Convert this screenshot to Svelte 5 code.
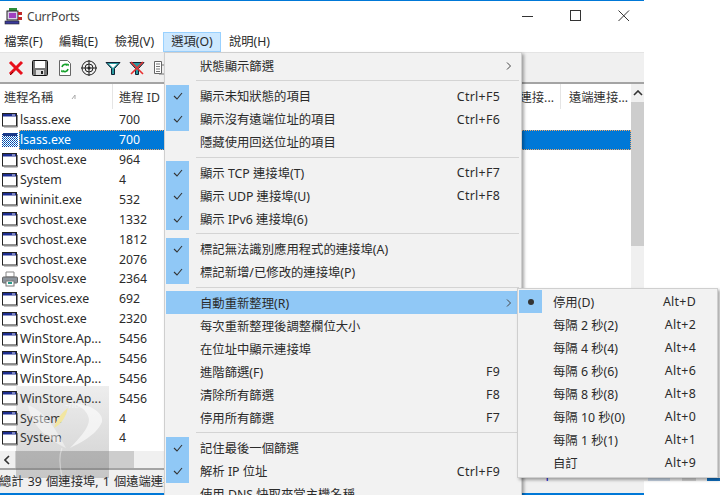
<script>
	const rows = [
		['lsass.exe', 700],
		['lsass.exe', 700, 'selected'],
		['svchost.exe', 964],
		['System', 4],
		['wininit.exe', 532],
		['svchost.exe', 1332],
		['svchost.exe', 1812],
		['svchost.exe', 2076],
		['spoolsv.exe', 2364, 'printer'],
		['services.exe', 692],
		['svchost.exe', 2320],
		['WinStore.Ap...', 5456],
		['WinStore.Ap...', 5456],
		['WinStore.Ap...', 5456],
		['WinStore.Ap...', 5456],
		['System', 4],
		['System', 4]
	];

	const menuBar = ['檔案(F)', '編輯(E)', '檢視(V)', '選項(O)', '說明(H)'];

	// null = separator
	const optionItems = [
		{ label: '狀態顯示篩選', arrow: true },
		null,
		{ label: '顯示未知狀態的項目', key: 'Ctrl+F5', check: true },
		{ label: '顯示沒有遠端位址的項目', key: 'Ctrl+F6', check: true },
		{ label: '隱藏使用回送位址的項目' },
		null,
		{ label: '顯示 TCP 連接埠(T)', key: 'Ctrl+F7', check: true },
		{ label: '顯示 UDP 連接埠(U)', key: 'Ctrl+F8', check: true },
		{ label: '顯示 IPv6 連接埠(6)', check: true },
		null,
		{ label: '標記無法識別應用程式的連接埠(A)', check: true },
		{ label: '標記新增/已修改的連接埠(P)', check: true },
		null,
		{ label: '自動重新整理(R)', arrow: true, active: true },
		{ label: '每次重新整理後調整欄位大小' },
		{ label: '在位址中顯示連接埠' },
		{ label: '進階篩選(F)', key: 'F9' },
		{ label: '清除所有篩選', key: 'F8' },
		{ label: '停用所有篩選', key: 'F7' },
		null,
		{ label: '記住最後一個篩選', check: true },
		{ label: '解析 IP 位址', key: 'Ctrl+F9', check: true },
		{ label: '使用 DNS 快取來當主機名稱' }
	];

	const refreshItems = [
		{ label: '停用(D)', key: 'Alt+D', bullet: true },
		{ label: '每隔 2 秒(2)', key: 'Alt+2' },
		{ label: '每隔 4 秒(4)', key: 'Alt+4' },
		{ label: '每隔 6 秒(6)', key: 'Alt+6' },
		{ label: '每隔 8 秒(8)', key: 'Alt+8' },
		{ label: '每隔 10 秒(0)', key: 'Alt+0' },
		{ label: '每隔 1 秒(1)', key: 'Alt+1' },
		{ label: '自訂', key: 'Alt+9' }
	];
</script>

<div class="page">
	<div class="window">
		<header class="titlebar">
			<svg class="app-icon" width="18" height="18" viewBox="0 0 18 18">
				<rect x="5" y="1" width="8" height="5" fill="#2f8f3a" />
				<rect x="3" y="4" width="11" height="9" fill="#d8d0e8" stroke="#222" />
				<rect x="5" y="6" width="7" height="5" fill="#a040c0" />
				<rect x="14" y="5" width="4" height="3" fill="#c02828" />
				<rect x="14" y="10" width="4" height="3" fill="#c02828" />
				<rect x="1" y="14" width="14" height="3" fill="#3a3a9a" stroke="#222" stroke-width=".6" />
			</svg>
			<span class="title">CurrPorts</span>
			<div class="controls">
				<svg width="12" height="12" viewBox="0 0 12 12"><path d="M0 6.5h11" stroke="#333" fill="none" /></svg>
				<svg width="12" height="12" viewBox="0 0 12 12"><rect x=".5" y=".5" width="10" height="10" stroke="#333" fill="none" /></svg>
				<svg width="12" height="12" viewBox="0 0 12 12"><path d="M.5.5l10.5 10.5M11 .5L.5 11" stroke="#333" fill="none" /></svg>
			</div>
		</header>

		<nav class="menubar">
			{#each menuBar as item, i}
				<span class="menubar-item" class:open={i === 3}>{item}</span>
			{/each}
		</nav>

		<div class="toolbar">
			<svg width="16" height="16" viewBox="0 0 16 16"><path d="M2 2l12 12M14 2L2 14" stroke="#e8101c" stroke-width="3" /><path d="M2 15l3-3" stroke="#700" stroke-width="1" /></svg>
			<svg width="16" height="16" viewBox="0 0 16 16">
				<rect x=".5" y=".5" width="15" height="15" rx="1" fill="#777" stroke="#111" />
				<rect x="3" y="1" width="10" height="7" fill="#fff" />
				<rect x="4" y="10" width="8" height="5" fill="#ddd" />
				<rect x="9" y="11" width="2" height="3" fill="#222" />
			</svg>
			<svg class="tight" width="16" height="16" viewBox="0 0 16 16">
				<path d="M2.5.5h8l3 3v12h-11z" fill="#fff" stroke="#666" />
				<path d="M5 7a3.2 3.2 0 0 1 5.5-1.5M11 9a3.2 3.2 0 0 1-5.5 1.5" stroke="#15a02a" stroke-width="1.6" fill="none" />
				<path d="M9.5 3.5l2.5.5-.5 2.6zM6.5 12.5L4 12l.5-2.6z" fill="#15a02a" />
			</svg>
			<svg width="16" height="16" viewBox="0 0 16 16">
				<circle cx="8" cy="8" r="7" fill="#eee" stroke="#222" />
				<circle cx="8" cy="8" r="4" fill="none" stroke="#222" />
				<circle cx="8" cy="8" r="1.5" fill="#222" />
				<path d="M8 0v16M0 8h16" stroke="#222" />
			</svg>
			<svg width="16" height="16" viewBox="0 0 16 16">
				<path d="M1 2.5h14L9.5 8.5v6h-3v-6z" fill="#2a9aa0" stroke="#123" stroke-width="1" />
				<path d="M4 4h8L8 8z" fill="#fff" />
			</svg>
			<svg width="16" height="16" viewBox="0 0 16 16">
				<path d="M1 2.5h14L9.5 8.5v6h-3v-6z" fill="#2a9aa0" stroke="#123" stroke-width="1" />
				<path d="M2 2l12 12M14 2L2 14" stroke="#e83030" stroke-width="1.6" />
			</svg>
			<svg class="tight" width="12" height="16" viewBox="0 0 12 16">
				<path d="M.5 1.5h7v12h-7z" fill="#fff" stroke="#666" />
				<path d="M2 4h4M2 6.5h4M2 9h4M2 11.5h4" stroke="#777" />
				<path d="M8 5h3v9H5" fill="none" stroke="#777" />
			</svg>
		</div>

		<div class="table">
			<div class="table-main">
				<div class="thead">
					<div class="th name-col">進程名稱<svg class="sort" width="6" height="6" viewBox="0 0 6 6"><path d="M1 5l3-4v4" stroke="#aaa" fill="none" /></svg></div>
					<div class="th id-col">進程 ID</div>
					<div class="th fill-col">連接...</div>
					<div class="th last-col">遠端連接...</div>
				</div>
				<div class="tbody">
					{#each rows as [name, pid, kind]}
						<div class="row" class:selected={kind === 'selected'}>
							{#if kind === 'printer'}
								<svg class="row-icon" width="16" height="16" viewBox="0 0 16 16">
									<path d="M4 1h8v5H4z" fill="#fff" stroke="#888" />
									<rect x=".5" y="6" width="15" height="6" rx="1" fill="#8c949c" stroke="#666" />
									<rect x="4" y="10" width="8" height="5" fill="#fff" stroke="#777" />
									<rect x="6" y="11" width="4" height="2" fill="#2a9a8a" />
								</svg>
							{:else if kind === 'selected'}
								<svg class="row-icon" width="16" height="16" viewBox="0 0 16 16">
									<defs>
										<pattern id="dither" width="2" height="2" patternUnits="userSpaceOnUse">
											<rect width="2" height="2" fill="#fff" />
											<rect width="1" height="1" fill="#0a3f98" />
											<rect x="1" y="1" width="1" height="1" fill="#0a6fd0" />
										</pattern>
									</defs>
									<rect x="0" y="1" width="16" height="14" fill="url(#dither)" />
									<rect x="1" y="1" width="14" height="3" fill="#1a3a8a" />
								</svg>
							{:else}
								<svg class="row-icon" width="16" height="16" viewBox="0 0 16 16">
									<rect x=".5" y="1.5" width="14" height="12.5" fill="#fff" stroke="#222" />
									<rect x="1" y="2" width="13" height="2.5" fill="#1c2c90" />
									<path d="M10 3h3" stroke="#dde" />
									<path d="M15.5 3v12H2" stroke="#888" fill="none" />
								</svg>
							{/if}
							<span class="name">{name}</span>
							<span class="pid">{pid}</span>
						</div>
					{/each}
				</div>
				<div class="hscroll">
					<svg class="hs-arrow" width="6" height="10" viewBox="0 0 6 10"><path d="M5 1L1 5l4 4" stroke="#333" stroke-width="1.6" fill="none" /></svg>
					<div class="hs-thumb"></div>
				</div>
			</div>
			<div class="vscroll">
				<div class="vs-arrow">
					<svg width="10" height="6" viewBox="0 0 10 6"><path d="M1 5l4-4 4 4" stroke="#333" stroke-width="1.6" fill="none" /></svg>
				</div>
				<div class="vs-thumb"></div>
			</div>
		</div>

		<footer class="status">總計 39 個連接埠, 1 個遠端連接埠</footer>
	</div>

	<div class="watermark">
		<svg width="93" height="92" viewBox="0 0 93 92">
			<path d="M12 19C14 40 36 56 50 62C40 44 30 26 12 19z" fill="#fff" opacity=".45" />
			<path d="M58 18C76 18 88 28 86 36C80 50 62 58 54 62C66 50 76 38 72 30C70 24 64 20 58 18z" fill="#fff" opacity=".6" />
			<path d="M38 42C40 34 46 26 52 22C50 30 46 38 38 42z" fill="#f2e6a0" />
			<path d="M46 62C42 72 44 82 46 90" stroke="#fff" stroke-width="1.2" fill="none" opacity=".4" />
		</svg>
		<span class="note">-note</span>
	</div>

	<div class="cut">
		<span class="link">http://www.nirsoft.net</span>
		<i class="pane"></i>
		<i class="pane short"></i>
		<b class="edge"></b>
	</div>

	<div class="menu options">
		{#each optionItems as item}
			{#if item}
				<div class="item" class:active={item.active}>
					<span class="gutter" class:on={item.check}>
						{#if item.check}
							<svg width="10" height="8" viewBox="0 0 10 8"><path d="M1 4l3 3 5-6" stroke="#333" stroke-width="1.1" fill="none" /></svg>
						{/if}
					</span>
					<span class="label">{item.label}</span>
					{#if item.key}<span class="key">{item.key}</span>{/if}
					{#if item.arrow}
						<svg class="arrow" width="5" height="8" viewBox="0 0 5 8"><path d="M1 .5L4.5 4 1 7.5" stroke="#444" fill="none" /></svg>
					{/if}
				</div>
			{:else}
				<div class="sep"></div>
			{/if}
		{/each}
	</div>

	<div class="menu refresh">
		{#each refreshItems as item}
			<div class="item">
				<span class="gutter" class:on={item.bullet}>
					{#if item.bullet}<i class="bullet"></i>{/if}
				</span>
				<span class="label">{item.label}</span>
				<span class="key">{item.key}</span>
			</div>
		{/each}
	</div>
</div>

<style>
	:global(body) {
		margin: 0;
		background: #fff;
	}

	.page {
		position: relative;
		width: 720px;
		height: 495px;
		overflow: hidden;
		font-family: 'Noto Sans', 'Noto Sans CJK TC', sans-serif;
		font-size: 12.3px;
		color: #2b2b2b;
	}

	.window {
		width: 644px;
		height: 495px;
		display: flex;
		flex-direction: column;
		background: #fff;
		border-top: 1px solid #0078d7;
		box-sizing: border-box;
	}

	.titlebar {
		flex: none;
		height: 29px;
		display: flex;
		align-items: center;
		padding: 1px 14px 0 4px;
		box-sizing: border-box;
		gap: 5px;
		font-size: 12px;
	}

	.title {
		color: #444;
		letter-spacing: -0.2px;
	}

	.controls {
		margin-left: auto;
		display: flex;
		gap: 36px;
	}

	.menubar {
		flex: none;
		height: 22px;
		display: flex;
		align-items: center;
		margin-left: -4px;
	}

	.menubar-item {
		width: 55px;
		text-align: center;
		white-space: nowrap;
		height: 20px;
		margin-top: 2px;
		line-height: 18px;
		box-sizing: border-box;
		border: 1px solid transparent;
	}

	.menubar-item:nth-child(3),
	.menubar-item:nth-child(5) {
		width: 57px;
	}

	.menubar-item.open {
		width: 58px;
		background: #cce8ff;
		border-color: #99d1ff;
	}

	.toolbar {
		flex: none;
		height: 32px;
		box-sizing: border-box;
		display: flex;
		align-items: center;
		gap: 8px;
		padding: 0 0 0 8px;
		background: #f0f0f0;
		border-top: 1px solid #e4e4e4;
		border-bottom: 2px solid #a4a4a4;
	}

	.toolbar .tight {
		margin-left: 1px;
	}

	.table {
		flex: 1;
		min-height: 0;
		display: flex;
	}

	.table-main {
		width: 631px;
		display: flex;
		flex-direction: column;
	}

	.thead {
		flex: none;
		height: 26px;
		display: flex;
	}

	.th {
		display: flex;
		align-items: center;
		box-sizing: border-box;
		height: 25px;
		padding-left: 4px;
		border-right: 1px solid #e5e5e5;
		color: #333;
	}

	.name-col {
		width: 113px;
	}

	.sort {
		margin-left: 18px;
	}

	.id-col {
		width: 80px;
		padding-left: 6px;
	}

	.fill-col {
		flex: 1;
		justify-content: flex-end;
		padding-right: 6px;
	}

	.last-col {
		width: 70px;
		padding-left: 8px;
		border-right: 0;
	}

	.tbody {
		flex: none;
		height: 341px;
		overflow: hidden;
	}

	.row {
		position: relative;
		height: 19.875px;
		display: flex;
		align-items: center;
		padding-left: 2px;
		box-sizing: border-box;
	}

	.row.selected {
		background: linear-gradient(90deg, #fff 19px, #0078d7 19px);
		color: #fff;
	}

	.row.selected::after {
		content: '';
		position: absolute;
		left: 19px;
		right: 0;
		top: 0;
		bottom: 0;
		border: 1px dotted #f0a868;
	}

	.row-icon {
		flex: none;
	}

	.name {
		width: 101px;
		padding-left: 2px;
		box-sizing: border-box;
		white-space: nowrap;
	}

	.hscroll {
		flex: none;
		height: 17px;
		display: flex;
		align-items: center;
		background: #f0f0f0;
	}

	.hs-arrow {
		margin: 0 5px 0 4px;
	}

	.hs-thumb {
		width: 119px;
		height: 100%;
		background: #cdcdcd;
	}

	.vscroll {
		width: 13px;
		height: 367px;
		background: #f0f0f0;
		display: flex;
		flex-direction: column;
	}

	.vs-arrow {
		height: 18px;
		display: flex;
		align-items: center;
		justify-content: center;
	}

	.vs-thumb {
		height: 144px;
		background: #cdcdcd;
	}

	.status {
		flex: none;
		height: 27px;
		box-sizing: border-box;
		border-top: 2px solid #a4a4a4;
		border-bottom: 2px solid #0078d7;
		background: #f0f0f0;
		line-height: 24px;
		margin-left: -1px;
		word-spacing: 1px;
		white-space: nowrap;
		overflow: hidden;
	}

	.watermark {
		position: absolute;
		left: 16px;
		top: 386px;
		width: 93px;
		height: 92px;
		background: linear-gradient(180deg, rgba(120, 120, 120, 0.13), rgba(90, 90, 90, 0.28));
	}

	.note {
		position: absolute;
		left: 49px;
		top: 12px;
		font: italic 11px 'Liberation Serif', serif;
		color: #f4f4f4;
	}

	.cut {
		position: absolute;
		left: 522px;
		top: 478px;
		width: 198px;
		height: 3px;
		overflow: hidden;
		background: #f0f0f0;
	}

	.link {
		position: absolute;
		left: 6px;
		top: -13px;
		font-size: 13px;
		line-height: 16px;
		color: #1a1ad0;
		white-space: nowrap;
	}

	.pane {
		position: absolute;
		left: 126px;
		top: 0;
		width: 22px;
		height: 3px;
		background: #c9d6e6;
	}

	.pane.short {
		left: 160px;
		width: 14px;
		background: #d2d2d2;
	}

	.edge {
		position: absolute;
		left: 185px;
		top: 0;
		width: 13px;
		height: 3px;
		background: #0f6fc0;
	}

	.menu {
		position: absolute;
		box-sizing: border-box;
		background: #f2f2f2;
		border: 1px solid #cfcfcf;
		padding: 1px;
		box-shadow: 2px 2px 3px rgba(0, 0, 0, 0.35);
	}

	.options {
		left: 164px;
		top: 52px;
		width: 358px;
		height: 460px;
	}

	.refresh {
		left: 517px;
		top: 288px;
		width: 201px;
		height: 190px;
	}

	.item {
		height: 23px;
		display: flex;
		align-items: center;
		font-size: 12.35px;
	}

	.item.active {
		background: #90c8f6;
	}

	.gutter {
		flex: none;
		width: 23px;
		height: 100%;
		display: flex;
		align-items: center;
		justify-content: center;
	}

	.gutter.on {
		background: #90c8f6;
	}

	.label {
		margin-left: 11px;
		white-space: nowrap;
	}

	.key {
		margin-left: auto;
		padding-right: 20px;
		letter-spacing: 0.3px;
	}

	.arrow {
		margin-left: auto;
		margin-right: 9px;
	}

	.sep {
		height: 7.5px;
		box-sizing: border-box;
		margin-left: 30px;
		margin-right: 1px;
		display: flex;
		align-items: center;
	}

	.sep::after {
		content: '';
		flex: 1;
		height: 1px;
		background: #d4d4d4;
	}

	.bullet {
		width: 6px;
		height: 6px;
		border-radius: 50%;
		background: #333;
	}
</style>
